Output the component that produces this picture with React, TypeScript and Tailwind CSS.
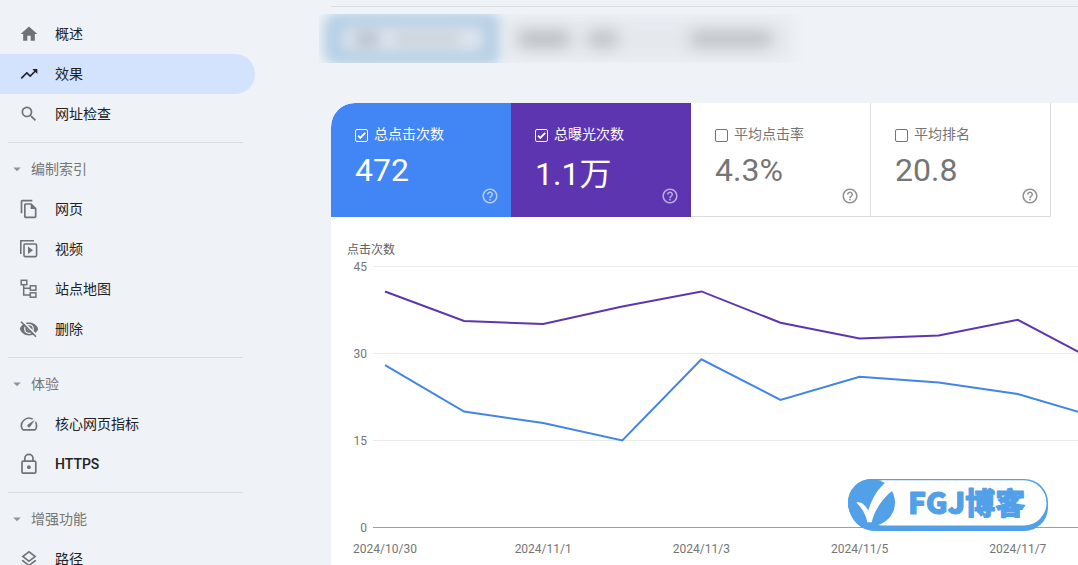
import type { ReactNode } from "react";
import {
  MdArrowDropDown,
  MdHelpOutline,
  MdHome,
  MdOutlineFileCopy,
  MdOutlineLayers,
  MdOutlineSpeed,
  MdSearch,
  MdTrendingUp,
} from "react-icons/md";

interface NavItem {
  label: string;
  icon: ReactNode;
  active?: boolean;
}

interface NavSection {
  title?: string;
  items: NavItem[];
}

const VideoStackIcon = () => (
  <svg viewBox="0 0 20 20" className="size-5" fill="none" stroke="currentColor" strokeWidth="1.6">
    <path d="M1.8 15V1.8H15" />
    <rect x="5" y="5" width="12.6" height="12.6" rx="1" />
    <path d="M9 7.5v7.5l5-3.75z" fill="currentColor" stroke="none" />
  </svg>
);

const SitemapIcon = () => (
  <svg viewBox="0 0 20 20" className="size-5" fill="none" stroke="currentColor" strokeWidth="1.5">
    <rect x="2.2" y="1.3" width="5.6" height="4.4" />
    <rect x="11.3" y="6.8" width="5.6" height="4.4" />
    <rect x="11.3" y="13.8" width="5.6" height="4.4" />
    <path d="M4.7 5.7V16h6.6M4.7 9.2h6.6" />
  </svg>
);

const HiddenIcon = () => (
  <svg viewBox="0 0 20 20" className="size-5">
    <path
      d="M10 3.6C5.6 3.6 2.2 6.2.8 10c1.4 3.8 4.8 6.4 9.2 6.4s7.8-2.6 9.2-6.4C17.8 6.2 14.4 3.6 10 3.6z"
      fill="currentColor"
    />
    <circle cx="10" cy="10" r="4.3" fill="none" stroke="#eff3f8" strokeWidth="1.3" />
    <circle cx="10" cy="10" r="1.6" fill="#eff3f8" />
    <path d="M3.6 2.1 18.3 16.8" stroke="#eff3f8" strokeWidth="1.8" />
    <path d="M2 2.7 17 17.7" stroke="currentColor" strokeWidth="1.6" />
  </svg>
);

const LockIcon = () => (
  <svg viewBox="0 0 20 22" className="h-[22px] w-5" fill="none" stroke="currentColor" strokeWidth="1.7">
    <rect x="3" y="8.2" width="13.8" height="12" rx="1.2" />
    <path d="M5.8 8.2V5.5a4.1 4.1 0 0 1 8.2 0v2.7" />
    <circle cx="9.9" cy="14.2" r="1.9" fill="currentColor" stroke="none" />
  </svg>
);

const sections: NavSection[] = [
  {
    items: [
      { label: "概述", icon: <MdHome size={20} /> },
      { label: "效果", icon: <MdTrendingUp size={20} />, active: true },
      { label: "网址检查", icon: <MdSearch size={20} /> },
    ],
  },
  {
    title: "编制索引",
    items: [
      { label: "网页", icon: <MdOutlineFileCopy size={20} /> },
      { label: "视频", icon: <VideoStackIcon /> },
      { label: "站点地图", icon: <SitemapIcon /> },
      { label: "删除", icon: <HiddenIcon /> },
    ],
  },
  {
    title: "体验",
    items: [
      { label: "核心网页指标", icon: <MdOutlineSpeed size={20} /> },
      { label: "HTTPS", icon: <LockIcon /> },
    ],
  },
  {
    title: "增强功能",
    items: [{ label: "路径", icon: <MdOutlineLayers size={20} /> }],
  },
];

const selectedCard = "pr-3 pb-3 text-white";
const plainCard = "border-r border-b border-[#dadce0] pr-[11px] pb-[11px] text-[#757575]";

const metrics = [
  { id: "clicks", label: "总点击次数", value: "472", checked: true, card: `${selectedCard} rounded-tl-3xl bg-[#4285f4]`, leading: "leading-10" },
  { id: "impressions", label: "总曝光次数", value: "1.1万", checked: true, card: `${selectedCard} bg-[#5e35b1]`, leading: "leading-12" },
  { id: "ctr", label: "平均点击率", value: "4.3%", checked: false, card: plainCard, leading: "leading-10" },
  { id: "position", label: "平均排名", value: "20.8", checked: false, card: plainCard, leading: "leading-10" },
];

const clicks = [28, 20, 18, 15, 29, 22, 26, 25, 23, 19];
const impressions = [40.7, 35.6, 35.1, 38.1, 40.7, 35.3, 32.6, 33.1, 35.8, 28.6];
const dates = ["2024/10/30", "2024/11/1", "2024/11/3", "2024/11/5", "2024/11/7"];
const ticks = [45, 30, 15, 0];

const toX = (index: number) => 54 + index * 79.1;
const toY = (value: number) => 269.5 - value * 5.8;
const toPoints = (values: number[]) => values.map((v, i) => `${toX(i)},${toY(v)}`).join(" ");

function Sidebar() {
  return (
    <nav className="w-[255px] shrink-0 pt-3.5 text-sm text-[#202124]">
      {sections.map((section, index) => (
        <div key={index}>
          {section.title && (
            <>
              <hr className="mt-2 mr-3 mb-1.5 ml-2 border-[#dadce0]" />
              <button type="button" className="flex h-10 w-full items-center gap-[5px] pl-2 text-[#757575]">
                <MdArrowDropDown size={18} className="text-[#909498]" />
                {section.title}
              </button>
            </>
          )}
          {section.items.map((item) => (
            <a
              key={item.label}
              href="#"
              className={
                item.active
                  ? "flex h-10 items-center gap-4 rounded-r-full bg-[#d3e3fd] pl-[19px]"
                  : "flex h-10 items-center gap-4 pl-[19px]"
              }
            >
              <span className={item.active ? "text-[#202124]" : "text-[#6f7377]"}>{item.icon}</span>
              <span className={item.label === "HTTPS" ? "font-medium" : ""}>{item.label}</span>
            </a>
          ))}
        </div>
      ))}
    </nav>
  );
}

function ObscuredFilters() {
  return (
    <div aria-hidden="true" className="-ml-3 flex h-[49px] w-[490px] items-center overflow-hidden">
      <div className="ml-1 flex h-[54px] w-[180px] shrink-0 items-center rounded-2xl bg-[#b8d0e5] px-5 blur-[6px]">
        <div className="flex h-6 flex-1 items-center gap-4 rounded-lg bg-[#dce3ed] pl-3">
          <div className="h-4 w-6 bg-[#bdc6d0]" />
          <div className="h-3 w-16 bg-[#ccd3dc]" />
        </div>
      </div>
      <div className="flex h-11 w-[290px] shrink-0 items-center rounded-lg bg-[#e5e9ee] pl-4 blur-[8px]">
        <div className="h-4 w-[50px] bg-[#b8bbc0]" />
        <div className="ml-5 h-4 w-7 bg-[#bbbec3]" />
        <div className="ml-[74px] h-4 w-20 bg-[#bcbfc4]" />
      </div>
    </div>
  );
}

function MetricCard({ metric }: { metric: (typeof metrics)[number] }) {
  return (
    <div className={`flex h-[114px] w-[180px] shrink-0 flex-col pt-[21px] pl-6 ${metric.card}`}>
      <label htmlFor={metric.id} className="flex h-5 items-center gap-1.5 text-sm">
        <span className="relative mt-0.5 size-[13px] shrink-0">
          <input
            id={metric.id}
            type="checkbox"
            defaultChecked={metric.checked}
            className="peer block size-[13px] appearance-none rounded-xs border border-current"
          />
          <svg
            viewBox="0 0 13 13"
            className="pointer-events-none absolute inset-0 hidden peer-checked:block"
            fill="none"
            stroke="currentColor"
            strokeWidth="1.8"
          >
            <path d="M3 6.6 5.3 8.9 10.2 3.8" />
          </svg>
        </span>
        {metric.label}
      </label>
      <div className="flex flex-1 justify-between">
        <span className={`mt-1.5 h-8 text-[32px] ${metric.leading}`}>{metric.value}</span>
        <button type="button" aria-label="帮助" className={metric.checked ? "self-end opacity-60" : "self-end opacity-80"}>
          <MdHelpOutline size={18} />
        </button>
      </div>
    </div>
  );
}

function Chart() {
  return (
    <section className="pt-[25px]">
      <h2 className="pl-4 text-xs leading-4 text-[#616161]">点击次数</h2>
      <svg width="860" height="308" className="block" fontSize="12" fill="#757575">
        {ticks.map((tick) => (
          <g key={tick}>
            <line
              x1="42"
              x2="860"
              y1={toY(tick)}
              y2={toY(tick)}
              stroke={tick === 0 ? "#9e9e9e" : "#ebebeb"}
            />
            <text x="36" y={toY(tick) + 4.5} textAnchor="end">
              {tick}
            </text>
          </g>
        ))}
        {dates.map((date, index) => (
          <text key={date} x={toX(index * 2)} y="295" textAnchor="middle">
            {date}
          </text>
        ))}
        <polyline points={toPoints(clicks)} fill="none" stroke="#4285e8" strokeWidth="2" />
        <polyline points={toPoints(impressions)} fill="none" stroke="#5e35b1" strokeWidth="2" />
      </svg>
    </section>
  );
}

function BlogBadge() {
  return (
    <svg
      width="200"
      height="52"
      viewBox="0 0 200 52"
      className="absolute right-[30px] bottom-[34px]"
      role="img"
      aria-label="FGJ博客"
    >
      <rect x="5" y="5" width="195" height="47" rx="23.5" fill="#52a0e8" />
      <rect width="200" height="47" rx="23.5" fill="#52a0e8" />
      <rect x="12" y="1.3" width="186.5" height="45.2" rx="22.6" fill="#fff" />
      <path d="M0 23.5C0 35 8 52 28 52V40H12z" fill="#52a0e8" />
      <circle cx="23.5" cy="23.5" r="23.5" fill="#52a0e8" />
      <path
        d="M8.3 23.5C13 22 17.500 26 20.3 31.5 24 19 30 10 37.5 3.5L44.5 11.5C35 19 27 30 23.7 43.3H19.3C18 36 14 29 8.3 23.5z"
        fill="#fff"
      />
      <text
        x="60"
        y="35"
        fontSize="30"
        fontWeight="900"
        fill="#52a0e8"
        stroke="#52a0e8"
        strokeWidth="1"
        strokeLinejoin="round"
        className="font-['Noto_Sans_CJK_SC',sans-serif]"
      >
        FGJ博客
      </text>
    </svg>
  );
}

export default function App() {
  return (
    <div className="relative flex h-screen overflow-hidden bg-[#eff3f8] font-[Roboto,'Noto_Sans_CJK_SC',sans-serif]">
      <Sidebar />
      <main className="ml-[76px] min-w-0 flex-1 pt-1.5">
        <hr className="mb-[7px] border-[#dadce0]" />
        <ObscuredFilters />
        <div className="mt-10 overflow-hidden rounded-tl-3xl bg-white">
          <div className="flex">
            {metrics.map((metric) => (
              <MetricCard key={metric.id} metric={metric} />
            ))}
          </div>
          <Chart />
        </div>
      </main>
      <BlogBadge />
    </div>
  );
}
